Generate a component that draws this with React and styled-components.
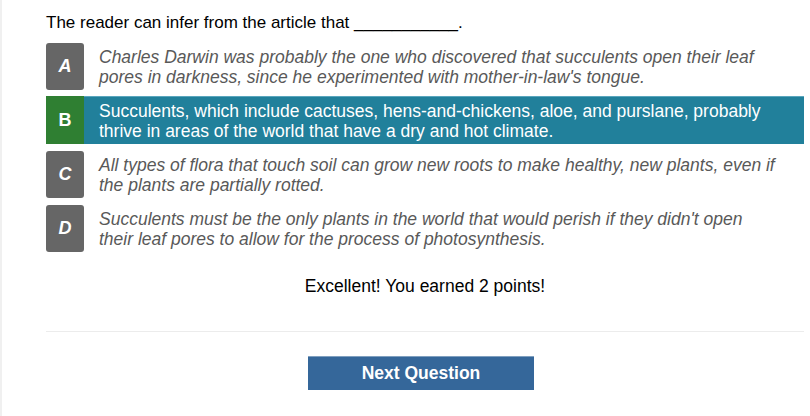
import React from 'react';
import styled, { createGlobalStyle } from 'styled-components';

const GlobalStyle = createGlobalStyle`
  html, body {
    margin: 0;
    padding: 0;
    background: #fff;
  }

  body {
    font-family: "Liberation Sans", Arial, sans-serif;
  }
`;

const Page = styled.div`
  width: 810px;
  height: 416px;
  box-sizing: border-box;
  border-left: 2px solid #f0f0f0;
  padding: 13px 6px 0 44px;
`;

const Question = styled.div`
  font-size: 17px;
  line-height: 20px;
  color: #000;
  margin-bottom: 9px;
`;

const Choices = styled.div`
  display: flex;
  flex-direction: column;
  gap: 6px;
`;

const Choice = styled.div`
  display: flex;
  height: 48px;
  background: ${({ selected }) => (selected ? '#21809b' : 'transparent')};
  border-top: 1px solid ${({ selected }) => (selected ? '#5aa6bd' : 'transparent')};
  box-sizing: border-box;
`;

const Letter = styled.div`
  flex: 0 0 38px;
  display: flex;
  align-items: center;
  justify-content: center;
  margin-top: ${({ selected }) => (selected ? '-1px' : '0')};
  background: ${({ selected }) => (selected ? '#2f7f32' : '#666')};
  border-radius: ${({ selected }) => (selected ? '0' : '3px')};
  color: #fff;
  font-size: 18px;
  font-weight: bold;
  font-style: ${({ selected }) => (selected ? 'normal' : 'italic')};
`;

const Text = styled.div`
  display: flex;
  align-items: center;
  padding-left: 15px;
  width: 679px;
  font-size: 17.5px;
  line-height: 20px;
  color: ${({ selected }) => (selected ? '#fff' : '#595959')};
  font-style: ${({ selected }) => (selected ? 'normal' : 'italic')};
`;

const Feedback = styled.div`
  margin-top: 24px;
  text-align: center;
  font-size: 17.5px;
  line-height: 20px;
  color: #000;
`;

const Divider = styled.hr`
  margin: 35px 0 0;
  border: 0;
  border-top: 1px solid #ececec;
`;

const Footer = styled.div`
  display: flex;
  justify-content: center;
  padding: 24px 8px 0 0;
`;

const NextButton = styled.button`
  width: 226px;
  height: 34px;
  border: 0;
  border-top: 1px solid #7f9fbf;
  border-radius: 0;
  background: #35679a;
  color: #fff;
  font-family: "Liberation Sans", Arial, sans-serif;
  font-size: 17.5px;
  font-weight: bold;
  cursor: pointer;
`;

const choices = [
  {
    letter: 'A',
    text: "Charles Darwin was probably the one who discovered that succulents open their leaf pores in darkness, since he experimented with mother-in-law's tongue.",
  },
  {
    letter: 'B',
    text: 'Succulents, which include cactuses, hens-and-chickens, aloe, and purslane, probably thrive in areas of the world that have a dry and hot climate.',
    selected: true,
  },
  {
    letter: 'C',
    text: 'All types of flora that touch soil can grow new roots to make healthy, new plants, even if the plants are partially rotted.',
  },
  {
    letter: 'D',
    text: "Succulents must be the only plants in the world that would perish if they didn't open their leaf pores to allow for the process of photosynthesis.",
  },
];

const App = () => (
  <>
    <GlobalStyle />
    <Page>
      <Question>The reader can infer from the article that ___________.</Question>
      <Choices>
        {choices.map(c => (
          <Choice key={c.letter} selected={c.selected}>
            <Letter selected={c.selected}>{c.letter}</Letter>
            <Text selected={c.selected}>{c.text}</Text>
          </Choice>
        ))}
      </Choices>
      <Feedback>Excellent! You earned 2 points!</Feedback>
      <Divider />
      <Footer>
        <NextButton>Next Question</NextButton>
      </Footer>
    </Page>
  </>
);

export default App;
